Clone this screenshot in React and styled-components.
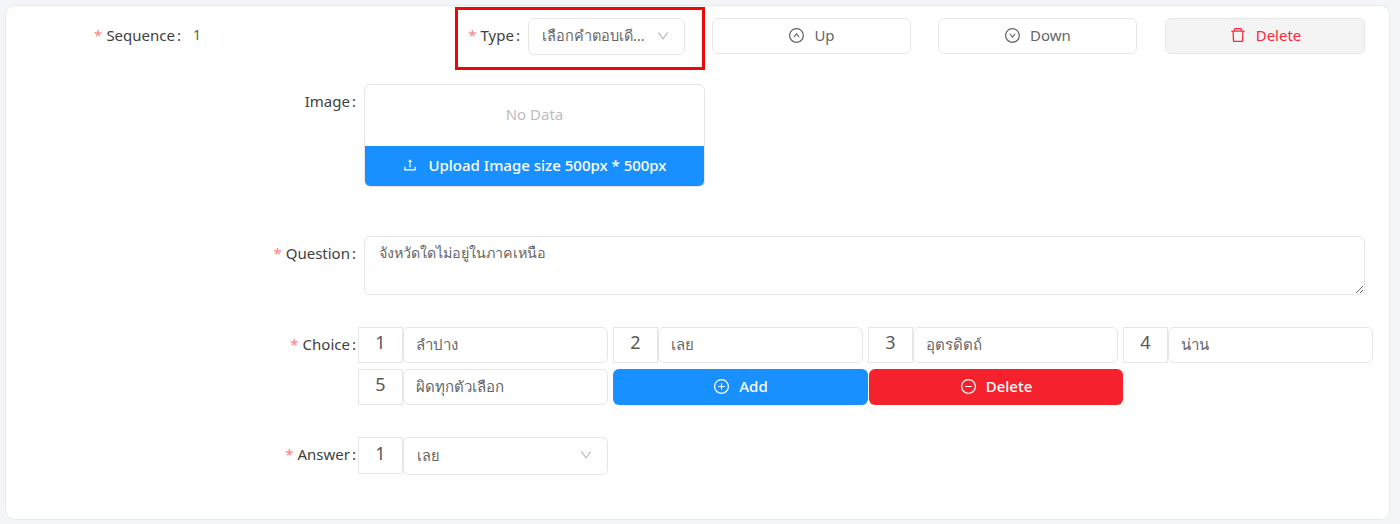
import React from 'react';
import styled, { createGlobalStyle } from 'styled-components';
import {
  AiOutlineUpCircle,
  AiOutlineDownCircle,
  AiOutlineDelete,
  AiOutlineUpload,
  AiOutlinePlusCircle,
  AiOutlineMinusCircle,
  AiOutlineDown,
} from 'react-icons/ai';

const FONT = `"Noto Sans", "Open Sans", sans-serif`;

const GlobalStyle = createGlobalStyle`
  html, body { margin: 0; padding: 0; background: #f3f5f9; }
  body { font-family: ${FONT}; font-size: 15px; color: #5c5c5c; }
  * { box-sizing: border-box; }
`;

const Page = styled.div`
  width: 1400px;
  height: 524px;
  padding: 5px 10px 4px 5px;
  overflow: hidden;
`;

const Card = styled.div`
  height: 515px;
  background: #fff;
  border: 1px solid #e8eaef;
  border-radius: 10px;
  padding: 12px 0 0 0;
`;

const TopRow = styled.div`
  display: flex;
  align-items: flex-start;
  height: 37px;
`;

const Label = styled.label`
  flex: none;
  width: ${(p) => p.$width || 350}px;
  display: flex;
  justify-content: flex-end;
  align-items: center;
  height: ${(p) => p.$height || 34}px;
  color: #404040;
  white-space: nowrap;
  &::after { content: ':'; margin-left: 2px; }
`;

const Star = styled.span`
  color: #ff7d84;
  margin-right: 4px;
`;

const SeqValue = styled.span`
  width: 274px;
  line-height: 34px;
  padding-left: 12px;
  font-size: 14px;
`;

const TypeGroup = styled.div`
  position: relative;
  display: flex;
  width: 250px;
  flex: none;
  margin-right: 7px;
`;

const Highlight = styled.div`
  position: absolute;
  left: 0;
  top: -11px;
  width: 250px;
  height: 63px;
  border: 3px solid #f00606;
  pointer-events: none;
`;

const Select = styled.div`
  flex: none;
  width: ${(p) => p.$width}px;
  height: ${(p) => p.$height || 37}px;
  margin-left: ${(p) => p.$ml || 0}px;
  display: flex;
  align-items: center;
  justify-content: space-between;
  padding: 0 14px 2px 13px;
  font-size: 14.5px;
  background: #fff;
  border: 1px solid #e6e6e6;
  border-radius: 6px;
  color: #666;
  white-space: nowrap;
  svg { color: #b5b5b5; font-size: 14px; }
`;

const ActionButton = styled.button`
  flex: none;
  width: ${(p) => (p.$danger ? 200 : 199)}px;
  height: 36px;
  margin-left: ${(p) => p.$ml}px;
  padding: 0 0 2px;
  display: flex;
  align-items: center;
  justify-content: center;
  gap: 9px;
  font: inherit;
  color: ${(p) => (p.$danger ? '#f9283c' : '#666')};
  background: ${(p) => (p.$danger ? '#f4f4f4' : '#fff')};
  border: 1px solid #e6e6e6;
  border-radius: 6px;
  svg { font-size: ${(p) => (p.$danger ? 18 : 17)}px; }
`;

const FormRow = styled.div`
  display: flex;
  align-items: flex-start;
  margin-top: ${(p) => p.$mt}px;
`;

const ImageBox = styled.div`
  width: 341px;
  height: 103px;
  margin-left: 8px;
  display: flex;
  flex-direction: column;
  border: 1px solid #e6e6e6;
  border-radius: 6px;
  overflow: hidden;
`;

const NoData = styled.div`
  height: 61px;
  display: flex;
  align-items: center;
  justify-content: center;
  padding-bottom: 4px;
  color: #bdbdbd;
`;

const UploadBar = styled.div`
  flex: 1;
  display: flex;
  align-items: center;
  justify-content: center;
  gap: 10px;
  padding-bottom: 2px;
  background: #1890ff;
  color: #fff;
  font-weight: 500;
  svg { font-size: 16px; }
`;

const QuestionArea = styled.textarea`
  display: block;
  width: 1001px;
  height: 59px;
  margin-left: 8px;
  padding: 5px 14px;
  font: inherit;
  font-size: 14.3px;
  color: #666;
  border: 1px solid #e6e6e6;
  border-radius: 6px;
  outline: none;
  resize: vertical;
`;

const ChoiceGrid = styled.div`
  display: grid;
  grid-template-columns: repeat(4, 255px);
  row-gap: 6px;
  margin-left: 2px;
`;

const ChoiceItem = styled.div`
  display: flex;
  padding-right: 5px;
`;

const Addon = styled.div`
  flex: none;
  width: 45px;
  height: ${(p) => p.$height || 36}px;
  display: flex;
  align-items: center;
  justify-content: center;
  padding-bottom: 6px;
  font-size: 18px;
  color: #595959;
  border: 1px solid #e6e6e6;
`;

const ChoiceInput = styled.div`
  flex: 1;
  height: 36px;
  display: flex;
  align-items: center;
  padding-left: 12px;
  color: #666;
  border: 1px solid #e6e6e6;
  border-radius: 6px;
`;

const FillButton = styled.button`
  height: 36px;
  width: ${(p) => p.$width}px;
  margin-left: ${(p) => p.$ml || 0}px;
  padding: 0 0 2px;
  display: flex;
  align-items: center;
  justify-content: center;
  gap: 9px;
  font: inherit;
  font-weight: 500;
  color: #fff;
  background: ${(p) => p.$bg};
  border: none;
  border-radius: 6px;
  svg { font-size: 17px; }
`;

const AnswerGroup = styled.div`
  display: flex;
  margin-left: 2px;
`;

const choices = ['ลำปาง', 'เลย', 'อุตรดิตถ์', 'น่าน'];

export default function App() {
  return (
    <Page>
      <GlobalStyle />
      <Card>
        <TopRow>
          <Label $width={175}><Star>*</Star>Sequence</Label>
          <SeqValue>1</SeqValue>
          <TypeGroup>
            <Highlight />
            <Label $width={65}><Star>*</Star>Type</Label>
            <Select $width={157} $ml={8}>
              เลือกคำตอบเดี...
              <AiOutlineDown />
            </Select>
          </TypeGroup>
          <ActionButton $ml={0}><AiOutlineUpCircle />Up</ActionButton>
          <ActionButton $ml={27}><AiOutlineDownCircle />Down</ActionButton>
          <ActionButton $ml={28} $danger><AiOutlineDelete />Delete</ActionButton>
        </TopRow>

        <FormRow $mt={29}>
          <Label>Image</Label>
          <ImageBox>
            <NoData>No Data</NoData>
            <UploadBar><AiOutlineUpload />Upload Image size 500px * 500px</UploadBar>
          </ImageBox>
        </FormRow>

        <FormRow $mt={49}>
          <Label><Star>*</Star>Question</Label>
          <QuestionArea defaultValue="จังหวัดใดไม่อยู่ในภาคเหนือ" />
        </FormRow>

        <FormRow $mt={32}>
          <Label><Star>*</Star>Choice</Label>
          <ChoiceGrid>
            {choices.map((c, i) => (
              <ChoiceItem key={c}>
                <Addon>{i + 1}</Addon>
                <ChoiceInput>{c}</ChoiceInput>
              </ChoiceItem>
            ))}
            <ChoiceItem>
              <Addon>5</Addon>
              <ChoiceInput>ผิดทุกตัวเลือก</ChoiceInput>
            </ChoiceItem>
            <FillButton $width={255} $bg="#1890ff"><AiOutlinePlusCircle />Add</FillButton>
            <FillButton $width={254} $ml={1} $bg="#f5222d"><AiOutlineMinusCircle />Delete</FillButton>
          </ChoiceGrid>
        </FormRow>

        <FormRow $mt={32}>
          <Label><Star>*</Star>Answer</Label>
          <AnswerGroup>
            <Addon $height={37}>1</Addon>
            <Select $width={205} $height={38}>
              เลย
              <AiOutlineDown />
            </Select>
          </AnswerGroup>
        </FormRow>
      </Card>
    </Page>
  );
}
